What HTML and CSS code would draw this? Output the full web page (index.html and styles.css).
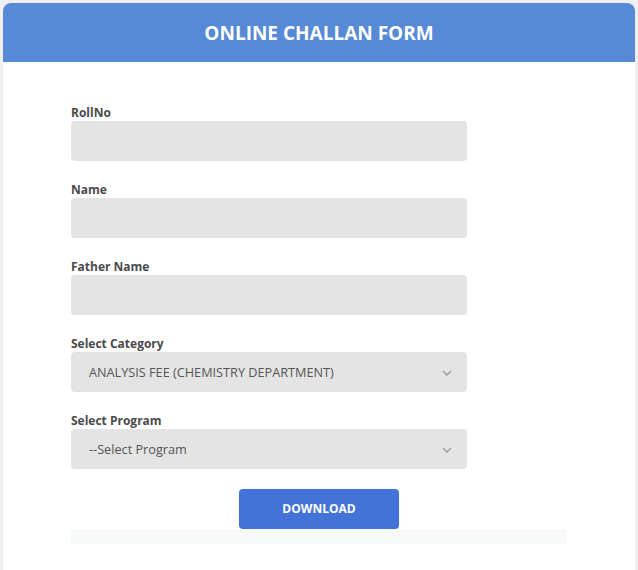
FILE: index.html
```html
<!DOCTYPE html>
<html>
<head>
<meta charset="utf-8">
<link rel="stylesheet" href="styles.css">
</head>
<body>
<div class="card">
  <div class="card-header">ONLINE CHALLAN FORM</div>
  <div class="card-body">
    <div class="form">
      <div class="field">
        <label class="label">RollNo</label>
        <div class="input"></div>
      </div>
      <div class="field">
        <label class="label">Name</label>
        <div class="input"></div>
      </div>
      <div class="field">
        <label class="label">Father Name</label>
        <div class="input"></div>
      </div>
      <div class="field">
        <label class="label">Select Category</label>
        <div class="input select">
          <span>ANALYSIS FEE (CHEMISTRY DEPARTMENT)</span>
          <svg class="chev" width="10" height="6" viewBox="0 0 10 6"><path d="M1 1 L5 5 L9 1" fill="none" stroke="#9a9a9a" stroke-width="1.3"/></svg>
        </div>
      </div>
      <div class="field">
        <label class="label">Select Program</label>
        <div class="input select">
          <span>--Select Program</span>
          <svg class="chev" width="10" height="6" viewBox="0 0 10 6"><path d="M1 1 L5 5 L9 1" fill="none" stroke="#9a9a9a" stroke-width="1.3"/></svg>
        </div>
      </div>
      <div class="actions">
        <button class="btn">DOWNLOAD</button>
      </div>
      <div class="strip"></div>
    </div>
  </div>
</div>
</body>
</html>
```
FILE: styles.css
```css
html, body {
  margin: 0;
  padding: 0;
}
body {
  background: #efefef;
  font-family: "Open Sans", "Liberation Sans", sans-serif;
  height: 570px;
  overflow: hidden;
  padding: 3px 3px 0 3px;
  box-sizing: border-box;
}
.card {
  background: #ffffff;
  border-radius: 8px 8px 0 0;
  overflow: hidden;
  height: 567px;
}
.card-header {
  background: #5689d6;
  color: #ffffff;
  height: 59px;
  display: flex;
  align-items: center;
  justify-content: center;
  font-size: 19px;
  font-weight: 700;
}
.card-body {
  padding: 42px 68px 0 68px;
}
.form {
  display: flex;
  flex-direction: column;
}
.field {
  display: flex;
  flex-direction: column;
  margin-bottom: 20px;
}
.label {
  font-size: 12px;
  font-weight: 700;
  line-height: 17px;
  color: #4a4a4a;
}
.input {
  width: 396px;
  height: 40px;
  background: #e4e4e4;
  border-radius: 4px;
  box-sizing: border-box;
}
.select {
  display: flex;
  align-items: center;
  justify-content: space-between;
  padding: 0 15px 0 18px;
  font-size: 12.7px;
  color: #555555;
}
.chev {
  display: block;
  margin-top: 1px;
}
.actions {
  display: flex;
  justify-content: center;
}
.btn {
  width: 160px;
  height: 40px;
  background: #4373d8;
  color: #ffffff;
  border: none;
  border-radius: 4px;
  font-family: "Open Sans", "Liberation Sans", sans-serif;
  font-size: 12px;
  font-weight: 700;
  line-height: 39px;
  padding: 0 0 1px 0;
}
.strip {
  height: 15px;
  background: #f8f9f9;
}
```
